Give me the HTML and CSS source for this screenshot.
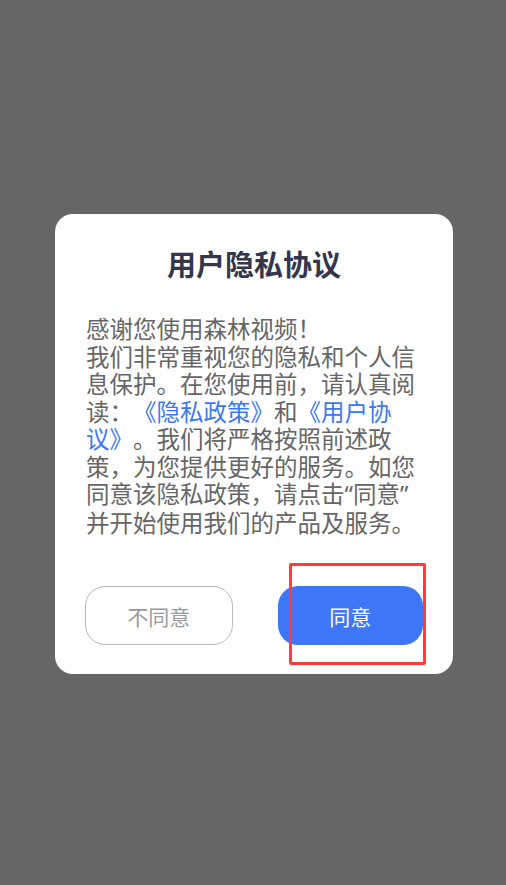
FILE: index.html
```html
<!DOCTYPE html>
<html lang="zh-CN">
<head>
<meta charset="utf-8">
<title>用户隐私协议</title>
<link rel="stylesheet" href="styles.css">
</head>
<body>
<div class="dialog">
  <h1 class="title">用户隐私协议</h1>
  <p class="content">感谢您使用森林视频！<br>我们非常重视您的隐私和个人信<br>息保护。在您使用前，请认真阅<br>读：<a class="link">《隐私政策》</a>和<a class="link">《用户协<br>议》</a>。我们将严格按照前述政<br>策，为您提供更好的服务。如您<br>同意该隐私政策，请点击<span class="quote">“</span>同意<span class="quote">”</span><br>并开始使用我们的产品及服务。</p>
  <div class="actions">
    <button class="btn btn-disagree">不同意</button>
    <button class="btn btn-agree">同意</button>
  </div>
</div>
<div class="highlight"></div>
</body>
</html>
```
FILE: styles.css
```css
html, body {
  margin: 0;
  padding: 0;
}
body {
  background: #666666;
  width: 506px;
  height: 885px;
  overflow: hidden;
  font-family: "Noto Sans CJK SC", "Noto Sans", sans-serif;
}
.dialog {
  margin: 214px 0 0 55px;
  width: 398px;
  height: 460px;
  box-sizing: border-box;
  background: #ffffff;
  border-radius: 18px;
  padding: 29px 30px 29px 30px;
  display: flex;
  flex-direction: column;
}
.title {
  margin: 0;
  font-size: 29px;
  line-height: 40px;
  font-weight: 700;
  color: #33364d;
  text-align: center;
}
.content {
  margin: 32px 0 0 1px;
  font-size: 23.5px;
  line-height: 27.5px;
  color: #666666;
  white-space: nowrap;
  text-spacing-trim: space-all;
}
.quote {
  font-family: "Noto Sans", sans-serif;
}
.link {
  color: #3b78f5;
  text-decoration: none;
}
.actions {
  margin-top: auto;
  display: flex;
  gap: 45px;
}
.btn {
  flex: 1;
  height: 59px;
  border-radius: 20px;
  font-family: "Noto Sans CJK SC", "Noto Sans", sans-serif;
  font-size: 21px;
  padding: 0;
  box-sizing: border-box;
}
.btn-disagree {
  background: #ffffff;
  border: 1px solid #b8b8b8;
  color: #9a9a9a;
}
.btn-agree {
  background: #3d76f7;
  border: none;
  color: #ffffff;
}
.highlight {
  position: absolute;
  left: 289px;
  top: 563px;
  width: 137px;
  height: 102px;
  box-sizing: border-box;
  border: 3px solid #ff3b3b;
  border-radius: 2px;
}
```
